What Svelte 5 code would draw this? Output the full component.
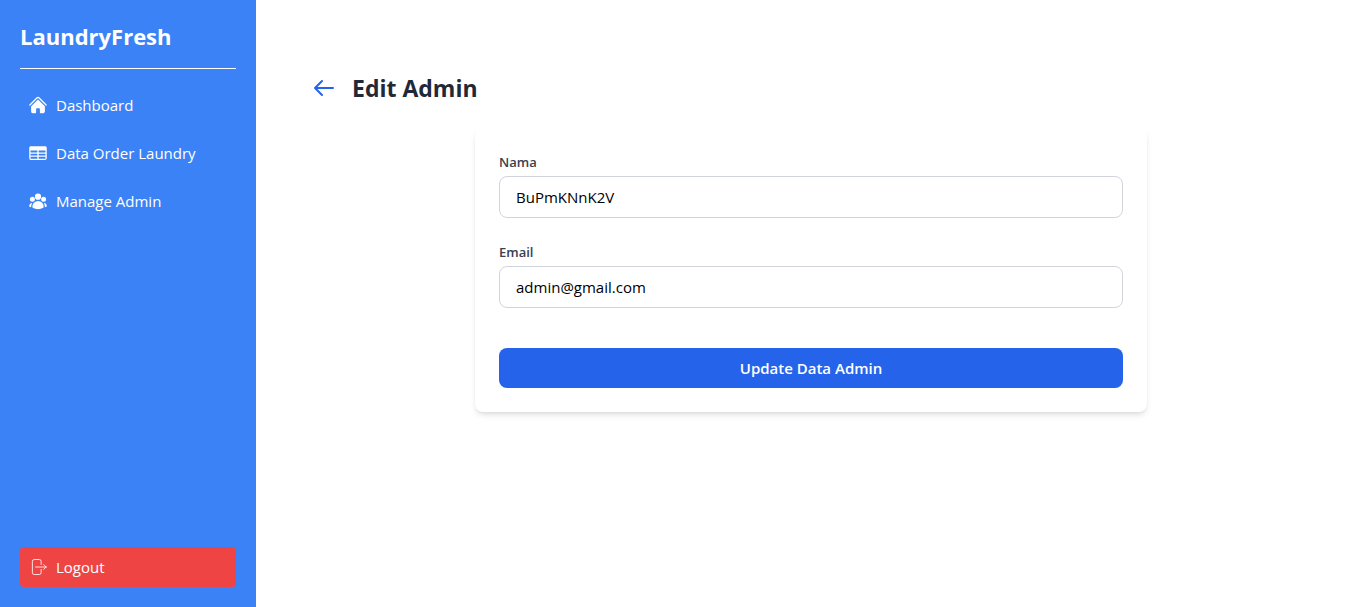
<script>
  let nama = $state('BuPmKNnK2V');
  let email = $state('admin@gmail.com');
</script>

<div class="layout">
  <aside class="sidebar">
    <h1 class="brand">LaundryFresh</h1>
    <nav class="menu">
      <a class="item" href="#dashboard">
        <svg viewBox="0 0 24 24" fill="currentColor" aria-hidden="true">
          <path d="M11.47 3.841a.75.75 0 0 1 1.06 0l8.69 8.69a.75.75 0 1 0 1.06-1.061l-8.689-8.69a2.25 2.25 0 0 0-3.182 0l-8.69 8.69a.75.75 0 1 0 1.061 1.06l8.69-8.689Z" />
          <path d="m12 5.432 8.159 8.159c.03.03.06.058.091.086v6.198c0 1.035-.84 1.875-1.875 1.875H15a.75.75 0 0 1-.75-.75v-4.5a.75.75 0 0 0-.75-.75h-3a.75.75 0 0 0-.75.75V21a.75.75 0 0 1-.75.75H5.625a1.875 1.875 0 0 1-1.875-1.875v-6.198a2.29 2.29 0 0 0 .091-.086L12 5.432Z" />
        </svg>
        <span>Dashboard</span>
      </a>
      <a class="item" href="#orders">
        <svg viewBox="0 0 24 24" fill="currentColor" aria-hidden="true">
          <path fill-rule="evenodd" clip-rule="evenodd" d="M1.5 5.625c0-1.036.84-1.875 1.875-1.875h17.25c1.035 0 1.875.84 1.875 1.875v12.75c0 1.035-.84 1.875-1.875 1.875H3.375A1.875 1.875 0 0 1 1.5 18.375V5.625ZM21 9.375A.375.375 0 0 0 20.625 9h-7.5a.375.375 0 0 0-.375.375v1.5c0 .207.168.375.375.375h7.5a.375.375 0 0 0 .375-.375v-1.5Zm0 3.75a.375.375 0 0 0-.375-.375h-7.5a.375.375 0 0 0-.375.375v1.5c0 .207.168.375.375.375h7.5a.375.375 0 0 0 .375-.375v-1.5Zm0 3.75a.375.375 0 0 0-.375-.375h-7.5a.375.375 0 0 0-.375.375v1.5c0 .207.168.375.375.375h7.5a.375.375 0 0 0 .375-.375v-1.5ZM10.875 18.75a.375.375 0 0 0 .375-.375v-1.5a.375.375 0 0 0-.375-.375h-7.5a.375.375 0 0 0-.375.375v1.5c0 .207.168.375.375.375h7.5ZM3.375 15h7.5a.375.375 0 0 0 .375-.375v-1.5a.375.375 0 0 0-.375-.375h-7.5a.375.375 0 0 0-.375.375v1.5c0 .207.168.375.375.375Zm0-3.75h7.5a.375.375 0 0 0 .375-.375v-1.5A.375.375 0 0 0 10.875 9h-7.5A.375.375 0 0 0 3 9.375v1.5c0 .207.168.375.375.375Z" />
        </svg>
        <span>Data Order Laundry</span>
      </a>
      <a class="item" href="#admins">
        <svg viewBox="0 0 24 24" fill="currentColor" aria-hidden="true">
          <path fill-rule="evenodd" clip-rule="evenodd" d="M8.25 6.75a3.75 3.75 0 1 1 7.5 0 3.75 3.75 0 0 1-7.5 0ZM15.75 9.75a3 3 0 1 1 6 0 3 3 0 0 1-6 0ZM2.25 9.75a3 3 0 1 1 6 0 3 3 0 0 1-6 0ZM6.31 15.117A6.745 6.745 0 0 1 12 12a6.745 6.745 0 0 1 6.709 7.498.75.75 0 0 1-.372.568A12.696 12.696 0 0 1 12 21.75c-2.305 0-4.47-.612-6.337-1.684a.75.75 0 0 1-.372-.568 6.787 6.787 0 0 1 1.019-4.38Z" />
          <path d="M5.082 14.254a8.287 8.287 0 0 0-1.308 5.135 9.687 9.687 0 0 1-1.764-.44l-.115-.04a.563.563 0 0 1-.373-.487l-.01-.121a3.75 3.75 0 0 1 3.57-4.047ZM20.226 19.389a8.287 8.287 0 0 0-1.308-5.135 3.75 3.75 0 0 1 3.57 4.047l-.01.121a.563.563 0 0 1-.373.486l-.115.04c-.567.2-1.156.349-1.764.441Z" />
        </svg>
        <span>Manage Admin</span>
      </a>
    </nav>
    <button class="item logout" type="button">
      <svg viewBox="0 0 24 24" fill="none" stroke="currentColor" stroke-width="1" stroke-linecap="round" stroke-linejoin="round" aria-hidden="true">
        <path d="M15.75 9V5.25A2.25 2.25 0 0 0 13.5 3h-6a2.25 2.25 0 0 0-2.25 2.25v13.5A2.25 2.25 0 0 0 7.5 21h6a2.25 2.25 0 0 0 2.25-2.25V15m3 0 3-3m0 0-3-3m3 3H9" />
      </svg>
      <span>Logout</span>
    </button>
  </aside>

  <main class="content">
    <header class="heading">
      <a class="back" href="#back" aria-label="Kembali">
        <svg viewBox="0 0 24 24" fill="none" stroke="currentColor" stroke-width="2" stroke-linecap="round" stroke-linejoin="round" aria-hidden="true">
          <path d="M10 19l-7-7m0 0l7-7m-7 7h18" />
        </svg>
      </a>
      <h2>Edit Admin</h2>
    </header>

    <form class="card" onsubmit={(event) => event.preventDefault()}>
      <div class="field">
        <label for="nama">Nama</label>
        <input id="nama" type="text" bind:value={nama} />
      </div>
      <div class="field">
        <label for="email">Email</label>
        <input id="email" type="email" bind:value={email} />
      </div>
      <button class="submit" type="submit">Update Data Admin</button>
    </form>
  </main>
</div>

<style>
  :global(body) {
    margin: 0;
    background: #fff;
  }

  .layout {
    display: flex;
    min-height: 100vh;
    font-family: 'Open Sans', 'Noto Sans', sans-serif;
    font-size: 15px;
    line-height: 24px;
  }

  .layout,
  .layout * {
    box-sizing: border-box;
  }

  .sidebar {
    display: flex;
    flex-direction: column;
    flex: none;
    width: 256px;
    padding: 20px;
    background: #3b82f6;
    color: #fff;
  }

  .brand {
    margin: 0 0 16px;
    padding-bottom: 16px;
    border-bottom: 1px solid #fff;
    font-size: 22px;
    line-height: 32px;
    font-weight: 700;
  }

  .menu {
    display: flex;
    flex-direction: column;
    flex: 1;
    gap: 8px;
  }

  .item {
    display: flex;
    align-items: center;
    gap: 8px;
    padding: 8px;
    border-radius: 4px;
    color: #fff;
    text-decoration: none;
  }

  .item svg {
    flex: none;
    width: 20px;
    height: 20px;
  }

  .logout {
    width: 100%;
    border: 0;
    background: #ef4444;
    font: inherit;
    cursor: pointer;
  }

  .content {
    flex: 1;
    min-width: 0;
    padding: 72px 56px;
  }

  .heading {
    display: flex;
    align-items: center;
    gap: 16px;
    margin-bottom: 24px;
  }

  .back {
    display: flex;
    color: #2563eb;
  }

  .back svg {
    width: 24px;
    height: 24px;
  }

  h2 {
    margin: 0;
    color: #1f2937;
    font-size: 23px;
    line-height: 32px;
    font-weight: 700;
  }

  .card {
    max-width: 672px;
    margin: 0 auto;
    padding: 24px;
    border-radius: 8px;
    background: #fff;
    box-shadow: 0 4px 6px -1px rgba(0, 0, 0, 0.1), 0 2px 4px -2px rgba(0, 0, 0, 0.1);
  }

  .field {
    margin-bottom: 24px;
  }

  label {
    display: block;
    margin-bottom: 4px;
    color: #374151;
    font-size: 13px;
    line-height: 20px;
    font-weight: 600;
  }

  input {
    display: block;
    width: 100%;
    padding: 8px 16px;
    border: 1px solid #d1d5db;
    border-radius: 8px;
    background: #fff;
    color: #000;
    font: inherit;
  }

  .submit {
    display: block;
    width: 100%;
    margin-top: 40px;
    padding: 8px 16px;
    border: 0;
    border-radius: 8px;
    background: #2563eb;
    color: #fff;
    font: inherit;
    font-weight: 600;
    cursor: pointer;
  }
</style>
